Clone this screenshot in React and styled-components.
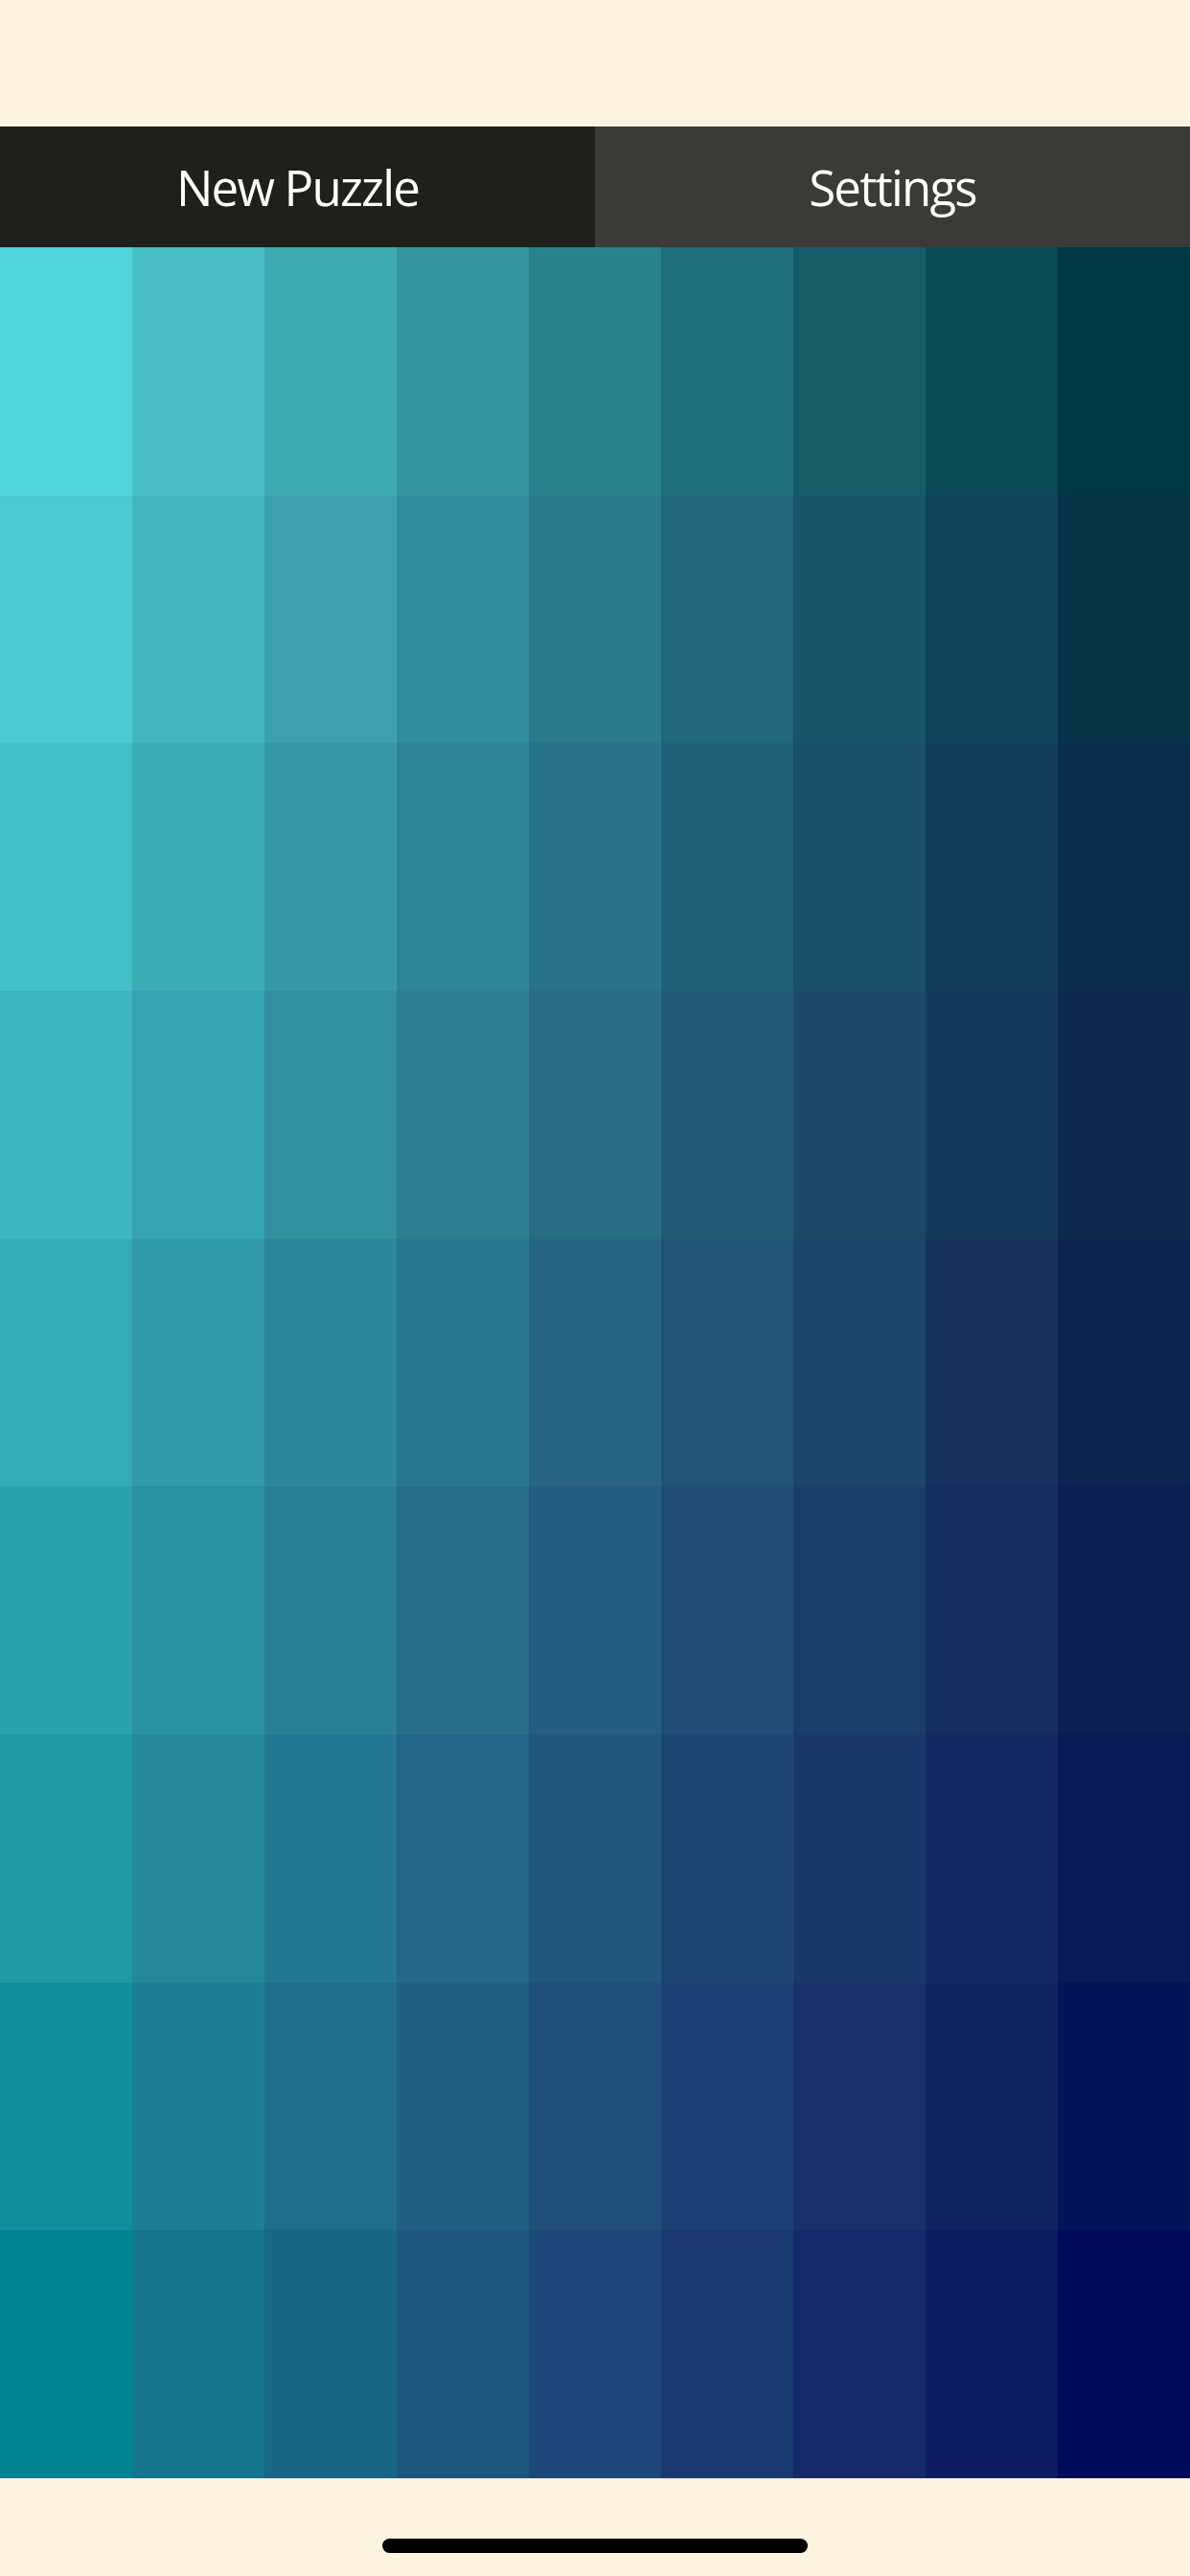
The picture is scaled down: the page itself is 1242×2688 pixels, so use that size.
import React from 'react';
import styled, { createGlobalStyle } from 'styled-components';

// corner colours of the board, the rest is blended in Lab space
const corners = {
  tl: [83, 212, 218],
  tr: [1, 56, 70],
  bl: [0, 134, 146],
  br: [1, 11, 92],
};

const SIZE = 9;

const toLinear = (v) => {
  const c = v / 255;
  return c <= 0.04045 ? c / 12.92 : Math.pow((c + 0.055) / 1.055, 2.4);
};

const fromLinear = (c) => {
  const v = c <= 0.0031308 ? 12.92 * c : 1.055 * Math.pow(c, 1 / 2.4) - 0.055;
  return Math.max(0, Math.min(255, Math.round(v * 255)));
};

const WX = 0.95047;
const WZ = 1.08883;

const rgbToLab = ([r, g, b]) => {
  const R = toLinear(r);
  const G = toLinear(g);
  const B = toLinear(b);
  const X = (0.4124 * R + 0.3576 * G + 0.1805 * B) / WX;
  const Y = 0.2126 * R + 0.7152 * G + 0.0722 * B;
  const Z = (0.0193 * R + 0.1192 * G + 0.9505 * B) / WZ;
  const f = (t) => (t > 0.008856 ? Math.cbrt(t) : 7.787 * t + 16 / 116);
  return [116 * f(Y) - 16, 500 * (f(X) - f(Y)), 200 * (f(Y) - f(Z))];
};

const labToRgb = ([L, a, b]) => {
  const fy = (L + 16) / 116;
  const fx = fy + a / 500;
  const fz = fy - b / 200;
  const inv = (t) => (t > 0.206893 ? t * t * t : (t - 16 / 116) / 7.787);
  const X = inv(fx) * WX;
  const Y = inv(fy);
  const Z = inv(fz) * WZ;
  const R = 3.2406 * X - 1.5372 * Y - 0.4986 * Z;
  const G = -0.9689 * X + 1.8758 * Y + 0.0415 * Z;
  const B = 0.0557 * X - 0.204 * Y + 1.057 * Z;
  return [fromLinear(R), fromLinear(G), fromLinear(B)];
};

const mix = (a, b, t) => a.map((v, i) => v + (b[i] - v) * t);

const labCorners = {
  tl: rgbToLab(corners.tl),
  tr: rgbToLab(corners.tr),
  bl: rgbToLab(corners.bl),
  br: rgbToLab(corners.br),
};

const cellColor = (row, col) => {
  const x = col / (SIZE - 1);
  const y = row / (SIZE - 1);
  const top = mix(labCorners.tl, labCorners.tr, x);
  const bottom = mix(labCorners.bl, labCorners.br, x);
  const c = labToRgb(mix(top, bottom, y));
  return `rgb(${c[0]}, ${c[1]}, ${c[2]})`;
};

const App = () => {
  const cells = [];
  for (let r = 0; r < SIZE; r++) {
    for (let c = 0; c < SIZE; c++) {
      cells.push({ id: `${r}-${c}`, color: cellColor(r, c) });
    }
  }

  return (
    <Screen>
      <GlobalStyle />
      <StatusArea />
      <Toolbar>
        <ToolButton dark>New Puzzle</ToolButton>
        <ToolButton>Settings</ToolButton>
      </Toolbar>
      <Board>
        {cells.map((it) => (
          <Tile key={it.id} style={{ backgroundColor: it.color }} />
        ))}
      </Board>
      <Footer>
        <HomeIndicator />
      </Footer>
    </Screen>
  );
};

export default App;

const GlobalStyle = createGlobalStyle`
  html, body {
    margin: 0;
    padding: 0;
    background: #fef2e0;
  }
`;

const Screen = styled.div`
  width: 1242px;
  height: 2688px;
  display: flex;
  flex-direction: column;
  background: #fef2e0;
  font-family: 'Open Sans', 'Noto Sans', sans-serif;
`;

const StatusArea = styled.div`
  height: 132px;
  flex-shrink: 0;
`;

const Toolbar = styled.div`
  height: 126px;
  flex-shrink: 0;
  display: grid;
  grid-template-columns: 1fr 1fr;
`;

const ToolButton = styled.button`
  border: none;
  margin: 0;
  padding: 0;
  background: ${(p) => (p.dark ? '#201f1b' : '#3b3a36')};
  color: #ffffff;
  font-family: inherit;
  font-size: 51px;
  letter-spacing: -1.8px;
  display: flex;
  align-items: center;
  justify-content: center;
  cursor: pointer;
`;

const Board = styled.div`
  height: 2328px;
  flex-shrink: 0;
  display: grid;
  grid-template-columns: repeat(9, 1fr);
  grid-template-rows: repeat(9, 1fr);
`;

const Tile = styled.div`
  width: 100%;
  height: 100%;
`;

const Footer = styled.div`
  flex: 1;
  display: flex;
  justify-content: center;
  padding-top: 63px;
  box-sizing: border-box;
`;

const HomeIndicator = styled.div`
  width: 444px;
  height: 15px;
  border-radius: 8px;
  background: #000000;
`;
